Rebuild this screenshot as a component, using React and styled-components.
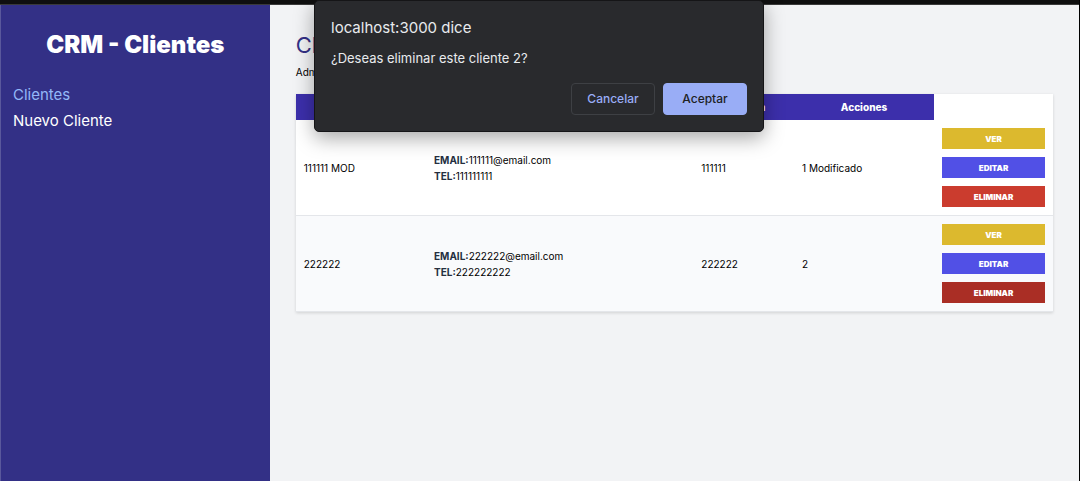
import React from "react";
import styled, { createGlobalStyle } from "styled-components";

const GlobalStyle = createGlobalStyle`
  *, *::before, *::after { box-sizing: border-box; }
  body {
    margin: 0;
    font-family: Inter, "Liberation Sans", sans-serif;
    font-size: 10px;
    line-height: 16px;
    color: #000;
    background: #f2f3f5;
  }
  h1, h2, p { margin: 0; }
`;

const Page = styled.div`
  display: flex;
  flex-direction: column;
  min-height: 100vh;
  border-right: 1px solid #000;
`;

const TopBar = styled.div`
  height: 5px;
  background: #0f0f0f;
  border-bottom: 1px solid #3a3a3a;
`;

const Layout = styled.div`
  display: flex;
  flex: 1;
`;

const Sidebar = styled.aside`
  width: 25%;
  padding: 24px 12px;
  background: #333086;
  border-left: 1px solid #5a589c;
`;

const Brand = styled.h2`
  font-size: 24px;
  line-height: 32px;
  font-weight: 900;
  text-align: center;
  color: #fff;
`;

const Nav = styled.nav`
  display: flex;
  flex-direction: column;
  gap: 4px;
  margin-top: 23px;
`;

const NavLink = styled.a`
  font-size: 15px;
  line-height: 22px;
  text-decoration: none;
  color: ${(p) => (p.$active ? "#93b8f8" : "#fff")};
`;

const Main = styled.main`
  flex: 1;
  min-width: 0;
  padding: 27px 26px;
`;

const Title = styled.h1`
  font-size: 22px;
  line-height: 27px;
  font-weight: 400;
  color: #333086;
`;

const Intro = styled.p`
  margin-top: 5px;
`;

const Table = styled.table`
  width: 100%;
  margin-top: 14px;
  border-collapse: collapse;
  table-layout: fixed;
  background: #fff;
  box-shadow: 0 1px 3px rgba(0, 0, 0, 0.14);
`;

const Col = styled.col`
  width: ${(p) => p.$width};
`;

const Th = styled.th`
  height: 26px;
  padding: 0 8px;
  font-weight: 800;
  color: #fff;
  background: #3c2fab;
`;

const Row = styled.tr`
  border-bottom: 1px solid #e4e6ea;
  background: ${(p) => (p.$tinted ? "#f9fafc" : "#fff")};
`;

const Td = styled.td`
  padding: 8px;
  vertical-align: middle;
`;

const Label = styled.span`
  font-weight: 700;
  color: #252f3f;
`;

const Actions = styled.div`
  display: flex;
  flex-direction: column;
  gap: 8px;
`;

const tones = {
  view: "#dcb92e",
  edit: "#5150e6",
  remove: "#cb3c2e",
  removeActive: "#aa2e25",
};

const ActionButton = styled.button`
  height: 21px;
  padding: 0;
  border: 0;
  font: 900 8px/12px Inter, "Liberation Sans", sans-serif;
  text-transform: uppercase;
  color: #fff;
  background: ${(p) => tones[p.$tone]};
`;

const Confirm = styled.dialog`
  position: absolute;
  top: 0;
  left: 314px;
  width: 450px;
  margin: 0;
  padding: 17px 16px 16px;
  border: 1px solid #151517;
  border-radius: 5px;
  color: #e8eaed;
  background: #292a2d;
  box-shadow: 0 6px 20px rgba(0, 0, 0, 0.35);
`;

const ConfirmTitle = styled.h2`
  font-size: 15px;
  line-height: 20px;
  font-weight: 400;
`;

const ConfirmText = styled.p`
  margin-top: 12px;
  font-size: 13px;
`;

const ConfirmActions = styled.div`
  display: flex;
  justify-content: flex-end;
  gap: 8px;
  margin-top: 17px;
`;

const ConfirmButton = styled.button`
  width: 84px;
  height: 32px;
  padding: 0;
  border: 1px solid ${(p) => (p.$primary ? "#99adf6" : "#3e4044")};
  border-radius: 4px;
  font: 500 12px/16px Inter, "Liberation Sans", sans-serif;
  color: ${(p) => (p.$primary ? "#202124" : "#99adf6")};
  background: ${(p) => (p.$primary ? "#99adf6" : "transparent")};
`;

const clients = [
  { name: "111111 MOD", email: "111111@email.com", phone: "111111111", company: "111111", notes: "1 Modificado" },
  { name: "222222", email: "222222@email.com", phone: "222222222", company: "222222", notes: "2", removing: true },
];

export default function App() {
  return (
    <>
      <GlobalStyle />
      <Page>
        <TopBar />
        <Layout>
          <Sidebar>
            <Brand>CRM - Clientes</Brand>
            <Nav>
              <NavLink href="#clientes" $active>Clientes</NavLink>
              <NavLink href="#nuevo">Nuevo Cliente</NavLink>
            </Nav>
          </Sidebar>
          <Main>
            <Title>Clientes</Title>
            <Intro>Administra tus clientes</Intro>
            <Table>
              <colgroup>
                <Col $width="17.2%" />
                <Col $width="35.3%" />
                <Col $width="13.3%" />
                <Col $width="18.5%" />
                <Col $width="15.7%" />
              </colgroup>
              <thead>
                <tr>
                  <Th>Nombre</Th>
                  <Th>Contacto</Th>
                  <Th>Empresa</Th>
                  <Th>Acciones</Th>
                </tr>
              </thead>
              <tbody>
                {clients.map((c, i) => (
                  <Row key={c.name} $tinted={i % 2 === 1}>
                    <Td>{c.name}</Td>
                    <Td>
                      <p><Label>EMAIL:</Label>{c.email}</p>
                      <p><Label>TEL:</Label>{c.phone}</p>
                    </Td>
                    <Td>{c.company}</Td>
                    <Td>{c.notes}</Td>
                    <Td>
                      <Actions>
                        <ActionButton type="button" $tone="view">Ver</ActionButton>
                        <ActionButton type="button" $tone="edit">Editar</ActionButton>
                        <ActionButton type="button" $tone={c.removing ? "removeActive" : "remove"}>Eliminar</ActionButton>
                      </Actions>
                    </Td>
                  </Row>
                ))}
              </tbody>
            </Table>
          </Main>
        </Layout>
      </Page>
      <Confirm open aria-labelledby="confirm-title">
        <ConfirmTitle id="confirm-title">localhost:3000 dice</ConfirmTitle>
        <ConfirmText>¿Deseas eliminar este cliente 2?</ConfirmText>
        <ConfirmActions>
          <ConfirmButton type="button">Cancelar</ConfirmButton>
          <ConfirmButton type="button" $primary>Aceptar</ConfirmButton>
        </ConfirmActions>
      </Confirm>
    </>
  );
}
